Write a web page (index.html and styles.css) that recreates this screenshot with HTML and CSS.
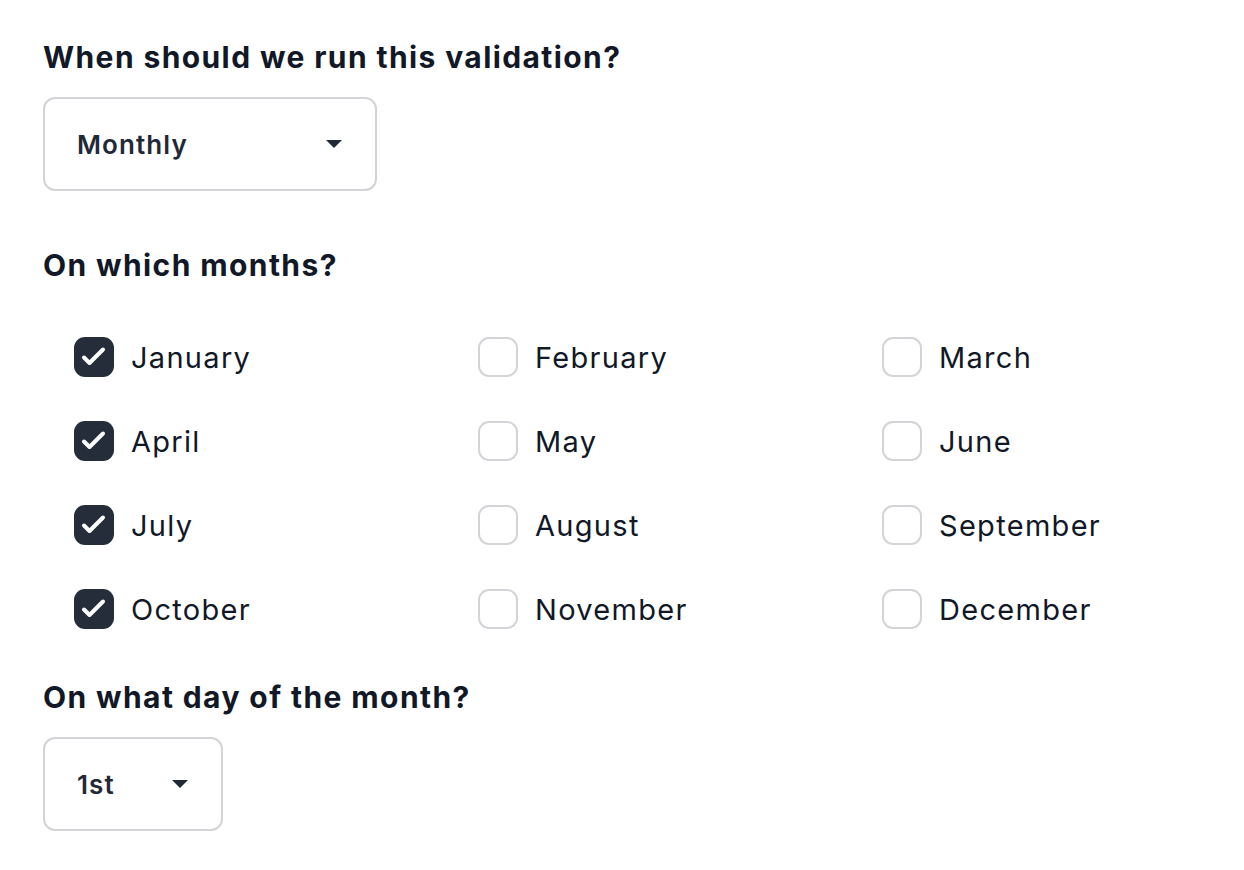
FILE: index.html
```html
<!doctype html>
<html>
<head>
<meta charset="utf-8">
<title>Validation schedule</title>
<link rel="stylesheet" href="styles.css">
</head>
<body>
<div class="form">
  <h2 class="question">When should we run this validation?</h2>
  <div class="select select-wide">
    <span>Monthly</span>
    <span class="caret"></span>
  </div>

  <h2 class="question q-months">On which months?</h2>
  <div class="months">
    <label class="month"><span class="box checked"><svg viewBox="0 0 40 40"><path d="M10 20.5l5.5 5.5L29 12.5"/></svg></span>January</label>
    <label class="month"><span class="box"></span>February</label>
    <label class="month"><span class="box"></span>March</label>
    <label class="month"><span class="box checked"><svg viewBox="0 0 40 40"><path d="M10 20.5l5.5 5.5L29 12.5"/></svg></span>April</label>
    <label class="month"><span class="box"></span>May</label>
    <label class="month"><span class="box"></span>June</label>
    <label class="month"><span class="box checked"><svg viewBox="0 0 40 40"><path d="M10 20.5l5.5 5.5L29 12.5"/></svg></span>July</label>
    <label class="month"><span class="box"></span>August</label>
    <label class="month"><span class="box"></span>September</label>
    <label class="month"><span class="box checked"><svg viewBox="0 0 40 40"><path d="M10 20.5l5.5 5.5L29 12.5"/></svg></span>October</label>
    <label class="month"><span class="box"></span>November</label>
    <label class="month"><span class="box"></span>December</label>
  </div>

  <h2 class="question q-day">On what day of the month?</h2>
  <div class="select select-narrow">
    <span>1st</span>
    <span class="caret"></span>
  </div>
</div>
</body>
</html>
```

FILE: styles.css
```css
body {
  margin: 0;
  background: #fff;
  font-family: Inter, "Noto Sans", sans-serif;
  color: #111827;
}
.form {
  padding: 37px 43px;
}
.question {
  margin: 0;
  font-size: 30px;
  line-height: 40px;
  font-weight: 700;
  letter-spacing: 1.4px;
  color: #111827;
}
.q-months {
  margin-top: 54px;
}
.q-day {
  margin-top: 48px;
}
.select {
  box-sizing: border-box;
  height: 94px;
  margin-top: 20px;
  border: 2px solid #d4d4d8;
  border-radius: 12px;
  padding: 0 33px 0 32px;
  display: flex;
  align-items: center;
  justify-content: space-between;
  font-size: 26px;
  font-weight: 600;
  letter-spacing: 1.1px;
  color: #1f2937;
}
.select-wide {
  width: 334px;
}
.select-narrow {
  width: 180px;
}
.caret {
  width: 0;
  height: 0;
  border-left: 8px solid transparent;
  border-right: 8px solid transparent;
  border-top: 8px solid #1f2937;
}
.months {
  margin: 52px 0 0 31px;
  display: grid;
  grid-template-columns: 404px 404px 1fr;
  row-gap: 44px;
}
.month {
  display: flex;
  align-items: center;
  gap: 17px;
  height: 40px;
  font-size: 29px;
  font-weight: 400;
  letter-spacing: 1.3px;
  color: #111827;
}
.box {
  box-sizing: border-box;
  width: 40px;
  height: 40px;
  border: 2px solid #d4d4d8;
  border-radius: 11px;
  background: #fff;
  display: flex;
}
.box.checked {
  border: none;
  background: #252d3b;
}
.box svg {
  width: 40px;
  height: 40px;
}
.box path {
  fill: none;
  stroke: #fff;
  stroke-width: 4;
  stroke-linecap: round;
  stroke-linejoin: round;
}
```
